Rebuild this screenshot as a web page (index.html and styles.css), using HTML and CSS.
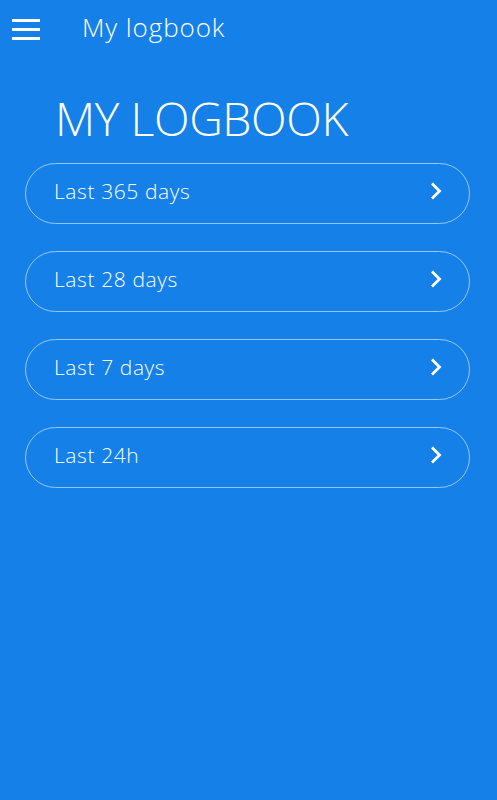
FILE: index.html
```html
<!DOCTYPE html>
<html>
    <head>
        <link rel="stylesheet" href="styles.css">
    </head>
    <body>
        <div id="l-topbar">
            <div class="menu-btn">
                <span></span><span></span><span></span>
            </div>
            <div class="topbar-title">My logbook</div>
        </div>
        <h1>MY LOGBOOK</h1>
        <ul id="periods">
            <li class="period">
                <span>Last 365 days</span>
                <svg width="14" height="20" viewBox="0 0 14 20"><path d="M3 2.5 L10.5 10 L3 17.5" fill="none" stroke="#fff" stroke-width="2.8"/></svg>
            </li>
            <li class="period">
                <span>Last 28 days</span>
                <svg width="14" height="20" viewBox="0 0 14 20"><path d="M3 2.5 L10.5 10 L3 17.5" fill="none" stroke="#fff" stroke-width="2.8"/></svg>
            </li>
            <li class="period">
                <span>Last 7 days</span>
                <svg width="14" height="20" viewBox="0 0 14 20"><path d="M3 2.5 L10.5 10 L3 17.5" fill="none" stroke="#fff" stroke-width="2.8"/></svg>
            </li>
            <li class="period">
                <span>Last 24h</span>
                <svg width="14" height="20" viewBox="0 0 14 20"><path d="M3 2.5 L10.5 10 L3 17.5" fill="none" stroke="#fff" stroke-width="2.8"/></svg>
            </li>
        </ul>
    </body>
</html>
```

FILE: styles.css
```css
html, body {
    height: 100%;
}
body {
    margin: 0;
    font-family: "Open Sans", sans-serif;
    font-weight: 300;
    color: #fff;
    background-color: #1580e8;
}
#l-topbar {
    display: flex;
    align-items: center;
    height: 58px;
    padding: 0 0 0 12px;
}
.menu-btn {
    display: flex;
    flex-direction: column;
    gap: 6px;
    width: 28px;
}
.menu-btn span {
    display: block;
    height: 3px;
    background-color: #fff;
}
.topbar-title {
    margin: 0 0 4px 42px;
    font-size: 26px;
    letter-spacing: 0.9px;
}
h1 {
    margin: 30px 0 0 55px;
    font-size: 46.5px;
    font-weight: 300;
    line-height: 60px;
    letter-spacing: -0.4px;
}
#periods {
    list-style: none;
    margin: 15px 27px 0 25px;
    padding: 0;
    display: flex;
    flex-direction: column;
    gap: 27px;
}
.period {
    box-sizing: border-box;
    display: flex;
    align-items: center;
    justify-content: space-between;
    height: 61px;
    padding: 0 26px 5px 28px;
    border: 1.5px solid rgba(255, 255, 255, 0.55);
    border-radius: 31px;
    font-size: 21px;
    letter-spacing: 0.6px;
}
```
